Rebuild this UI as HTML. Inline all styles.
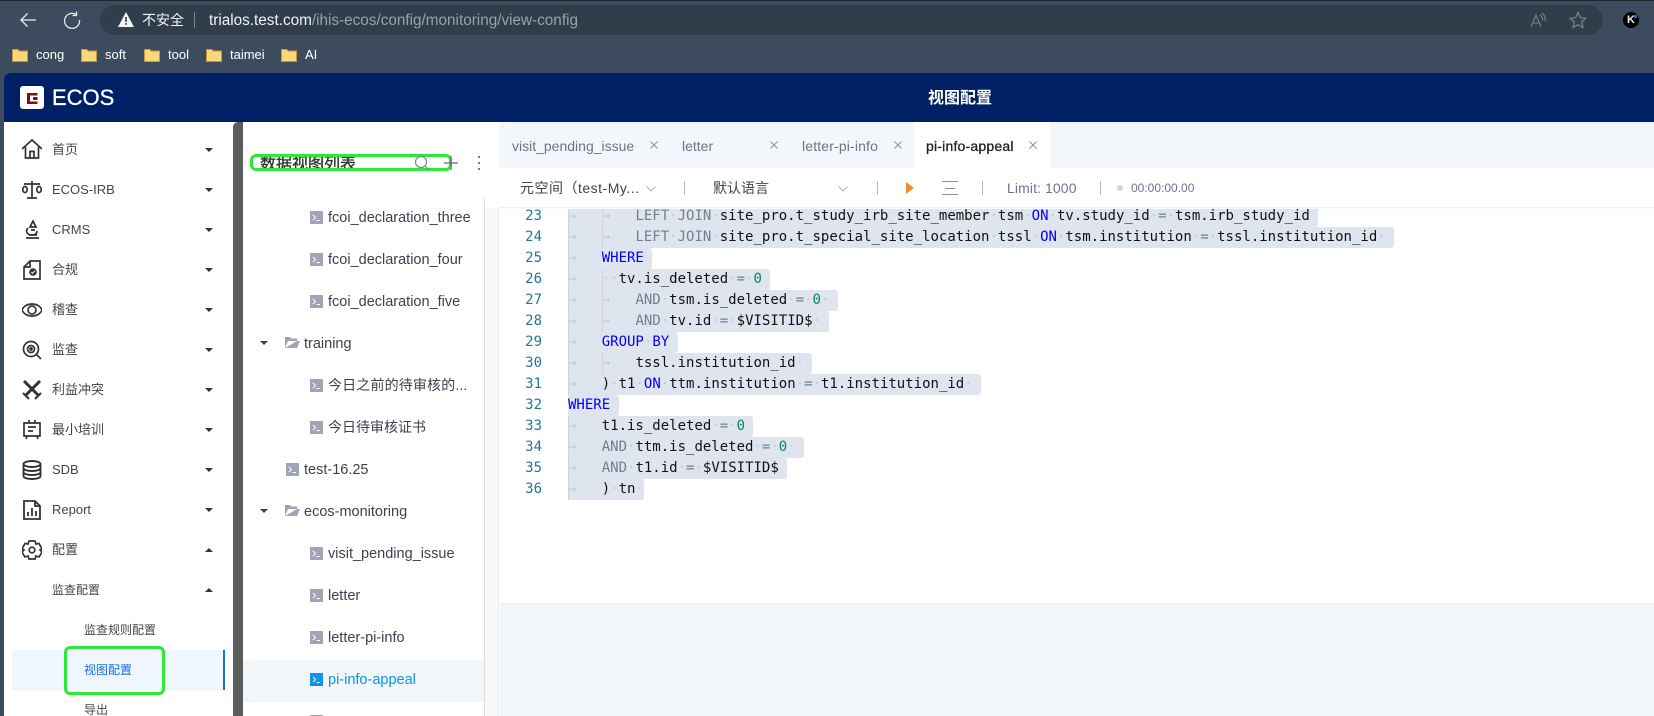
<!DOCTYPE html>
<html lang="zh"><head><meta charset="utf-8"><title>视图配置</title>
<style>
*{box-sizing:border-box}
html,body{margin:0;padding:0;width:1654px;height:716px;overflow:hidden}
body{position:relative;background:#3c4c5e;font-family:"Liberation Sans","Noto Sans CJK SC",sans-serif;color:#444}
.a{position:absolute}
.t{position:absolute;white-space:nowrap}
.bm{font-size:13px;color:#fff;top:48px;line-height:14px}
.nav{font-size:13px;color:#444;line-height:16px;left:52px}
.car{position:absolute;left:205px;width:0;height:0;border-left:4px solid transparent;border-right:4px solid transparent;border-top:4px solid #333}
.car.up{border-top:0;border-bottom:4px solid #333}
.ti{position:absolute;font-size:14.500px;color:#3d4150;line-height:20px;white-space:nowrap;margin-top:1px}
.ic{position:absolute;width:13px;height:13px}
.tab{position:absolute;top:137px;font-size:14px;line-height:18px;color:#6f7585;white-space:nowrap}
.x{position:absolute;top:141px;width:8px;height:8px}
.tb{position:absolute;font-size:14px;line-height:18px;top:179px;color:#444;white-space:nowrap}
.sep{position:absolute;top:181px;width:1px;height:14px;background:#b5b9c0}
.l{position:absolute;left:568px;height:21px;line-height:21px;white-space:pre;font-family:"DejaVu Sans Mono","Liberation Mono",monospace;font-size:14px;color:#111;background:#dfe5ee;border-radius:0 3px 3px 0}
.n{position:absolute;left:510px;width:32px;text-align:right;height:21px;line-height:21px;font-family:"DejaVu Sans Mono","Liberation Mono",monospace;font-size:14px;color:#237893}
.g{position:absolute;width:1px;background:#cfd3d8}
.l b{font-weight:normal;color:#0000ff}
.l i{font-style:normal;color:#708090}
.l u{text-decoration:none;color:#098658}
.l s{text-decoration:none;color:#c3cad3}
.ni{position:absolute;left:22px;width:20px;height:20px;fill:none;stroke:#333;stroke-width:1.7}
</style></head><body>
<!-- browser chrome -->
<div class="a" style="left:0;top:0;width:1654px;height:1px;background:#20262e"></div>
<svg class="a" style="left:18px;top:10px" width="20" height="20" fill="none" stroke="#e8ebee" stroke-width="1.3"><path d="M3 10H18M9.500 3.500L3 10L9.500 16.500"/></svg>
<svg class="a" style="left:63px;top:11px" width="18" height="18" fill="none" stroke="#e8ebee" stroke-width="1.3"><path d="M13 3.500A7.500 7.500 0 1 0 16.500 9M13.500 .5V4.500H9.500"/></svg>
<div class="a" style="left:100px;top:5px;width:1503px;height:30px;border-radius:15px;background:#303d4a"></div>
<svg class="a" style="left:118px;top:12px" width="16" height="15"><path d="M8 0L16 15H0Z" fill="#f3f4f5"/><path d="M7.200 5h1.600v5H7.200zM7.200 11h1.600v1.800H7.200z" fill="#303d4a"/></svg>
<div class="t" style="left:142px;top:11px;font-size:14px;line-height:18px;color:#f2f3f5">不安全</div>
<div class="a" style="left:194px;top:12px;width:1px;height:16px;background:#78828d"></div>
<div class="t" style="left:209px;top:12px;font-size:15.300px;line-height:18px;color:#9aa2ab"><span style="color:#f2f3f5">trialos.test.com</span>/ihis-ecos/config/monitoring/view-config</div>
<svg class="a" style="left:1530px;top:12px" width="17" height="16" fill="none" stroke="#7b848d" stroke-width="1.100"><path d="M1 15L6 3L11 15M3 11H9M10 3Q13 5 12.500 9M12 1Q16 4 15 9"/></svg>
<svg class="a" style="left:1569px;top:11px" width="18" height="18" fill="none" stroke="#7b848d" stroke-width="1.200"><path d="M9 1.500L11.300 6.700L16.800 7.300L12.700 11L13.900 16.500L9 13.700L4.100 16.500L5.300 11L1.200 7.300L6.700 6.700Z"/></svg>
<div class="a" style="left:1623px;top:12px;width:16px;height:16px;border-radius:50%;background:#000"></div>
<div class="t" style="left:1627px;top:14px;font-size:11px;line-height:12px;font-weight:bold;color:#eee">K</div>
<div class="a" style="left:1634px;top:15px;width:3px;height:3px;background:#2a6ee0"></div>
<!-- bookmarks -->
<svg class="a" style="left:12px;top:48px" width="16" height="14"><path d="M.5 1.500H6L7 3H15.500V13.500H.5Z" fill="#fbd777" stroke="#c9973a"/></svg><div class="t bm" style="left:36px">cong</div>
<svg class="a" style="left:81px;top:48px" width="16" height="14"><path d="M.5 1.500H6L7 3H15.500V13.500H.5Z" fill="#fbd777" stroke="#c9973a"/></svg><div class="t bm" style="left:105px">soft</div>
<svg class="a" style="left:144px;top:48px" width="16" height="14"><path d="M.5 1.500H6L7 3H15.500V13.500H.5Z" fill="#fbd777" stroke="#c9973a"/></svg><div class="t bm" style="left:168px">tool</div>
<svg class="a" style="left:206px;top:48px" width="16" height="14"><path d="M.5 1.500H6L7 3H15.500V13.500H.5Z" fill="#fbd777" stroke="#c9973a"/></svg><div class="t bm" style="left:230px">taimei</div>
<svg class="a" style="left:281px;top:48px" width="16" height="14"><path d="M.5 1.500H6L7 3H15.500V13.500H.5Z" fill="#fbd777" stroke="#c9973a"/></svg><div class="t bm" style="left:305px">AI</div>
<!-- app -->
<div class="a" style="left:4px;top:73px;width:1650px;height:643px;background:#fff;border-radius:6px 0 0 0;overflow:hidden"></div>
<div class="a" style="left:4px;top:73px;width:1650px;height:49px;background:#002065;border-radius:6px 0 0 0"></div>
<div class="a" style="left:20px;top:86px;width:24px;height:23px;background:#fff;border-radius:3px"></div>
<svg class="a" style="left:27px;top:93px" width="11" height="11"><path d="M0 0H10.500V2.500H3V8.500H10.500V11H0Z" fill="#7f0f14"/><path d="M6 4H10.500V7H6Z" fill="#7f0f14"/></svg>
<div class="t" style="left:52px;top:85px;font-size:22px;line-height:26px;color:#fff;-webkit-text-stroke:.3px #fff">ECOS</div>
<div class="t" style="left:928px;top:89px;font-size:16px;line-height:20px;font-weight:bold;color:#fff">视图配置</div>
<!-- sidebar scrollbar -->
<div class="a" style="left:233px;top:122px;width:10px;height:594px;background:#5c5c5c;border-radius:5px 0 0 0"></div>
<!-- sidebar nav -->
<svg class="ni" style="top:139px" viewBox="0 0 20 20" width="20" height="20"><path d="M0 10L10 1L20 10M3.500 8V19H16.500V8M8 19V12.500H12V19"/></svg>
<div class="t nav" style="top:142px">首页</div><div class="car" style="top:148px"></div>
<svg class="ni" style="top:180px" viewBox="0 0 20 20" width="20" height="20"><path d="M10 1V18M5 18H15M2 4H18"/><ellipse cx="3" cy="9.500" rx="2.200" ry="3"/><ellipse cx="17" cy="9.500" rx="2.200" ry="3"/></svg>
<div class="t nav" style="top:182px">ECOS-IRB</div><div class="car" style="top:188px"></div>
<svg class="ni" style="top:220px" viewBox="0 0 20 20" width="20" height="20"><path d="M4 18H17M7 15H15M11 1L8 7H14ZM6 8C3 11 5 15 10 15C14 15 15 13 15 11M9 10H13"/></svg>
<div class="t nav" style="top:222px">CRMS</div><div class="car" style="top:228px"></div>
<svg class="ni" style="top:260px" viewBox="0 0 20 20" width="20" height="20"><path d="M8 1H18V19H2V7ZM8 1V7H2"/><circle cx="11" cy="12" r="3.800" fill="#333" stroke="none"/><path d="M9.300 12L10.600 13.300L12.800 10.800" style="stroke:#fff;stroke-width:1"/></svg>
<div class="t nav" style="top:262px">合规</div><div class="car" style="top:268px"></div>
<svg class="ni" style="top:300px" viewBox="0 0 20 20" width="20" height="20"><path d="M0 10C3 2 17 2 20 10C17 18 3 18 0 10Z"/><circle cx="10" cy="10" r="4"/></svg>
<div class="t nav" style="top:302px">稽查</div><div class="car" style="top:308px"></div>
<svg class="ni" style="top:340px" viewBox="0 0 20 20" width="20" height="20"><circle cx="9" cy="9" r="7.500"/><circle cx="9" cy="9" r="3.500"/><circle cx="9" cy="9" r="1" fill="#333"/><path d="M14.500 14.500L19 19"/></svg>
<div class="t nav" style="top:342px">监查</div><div class="car" style="top:348px"></div>
<svg class="ni" style="top:380px" viewBox="0 0 20 20" width="20" height="20"><path style="stroke-width:3" d="M2 1L17 16M18 1L3 16"/><path style="stroke-width:2" d="M1 13L7 19M13 19L19 13"/></svg>
<div class="t nav" style="top:382px">利益冲突</div><div class="car" style="top:388px"></div>
<svg class="ni" style="top:420px" viewBox="0 0 20 20" width="20" height="20"><path d="M2 3H18V16H2ZM6 7H14M6 11H11M7 0V3M13 0V3M5 16L4 19M15 16L16 19"/></svg>
<div class="t nav" style="top:422px">最小培训</div><div class="car" style="top:428px"></div>
<svg class="ni" style="top:460px;stroke-width:1.9" viewBox="0 0 20 20" width="20" height="20"><ellipse cx="10" cy="4" rx="8.500" ry="3"/><path d="M1.500 4V16C1.500 20 18.500 20 18.500 16V4M1.500 8C1.500 12 18.500 12 18.500 8M1.500 12C1.500 16 18.500 16 18.500 12"/></svg>
<div class="t nav" style="top:462px">SDB</div><div class="car" style="top:468px"></div>
<svg class="ni" style="top:500px;stroke-width:1.8" viewBox="0 0 20 20" width="20" height="20"><path d="M2 1H13L18 6V19H2ZM13 1V6H18M6 16V12M10 16V8M14 16V11"/></svg>
<div class="t nav" style="top:502px">Report</div><div class="car" style="top:508px"></div>
<svg class="ni" style="top:540px" viewBox="0 0 20 20" width="20" height="20"><path d="M7 1H13L14 4L17 3.500L20 9L18 10L20 12L17 17L14 16L13 19H7L6 16L3 17L0 12L2 10L0 9L3 3.500L6 4Z"/><circle cx="10" cy="10" r="2.800"/></svg>
<div class="t nav" style="top:542px">配置</div><div class="car up" style="top:548px"></div>
<div class="t nav" style="top:582px;font-size:12px">监查配置</div><div class="car up" style="top:588px"></div>
<div class="t nav" style="top:622px;left:84px;font-size:12px">监查规则配置</div>
<div class="a" style="left:12px;top:650px;width:213px;height:40px;background:#f0f6fd;border-right:2px solid #1a6fe0"></div>
<div class="t nav" style="top:662px;left:84px;font-size:12px;color:#1a6fe0">视图配置</div>
<div class="t nav" style="top:702px;left:84px;font-size:12px">导出</div>
<div class="a" style="left:64px;top:646px;width:101px;height:49px;border:3px solid #2ee838;border-radius:6px"></div>
<!-- tree -->
<div class="a" style="left:484px;top:198px;width:1px;height:518px;background:#dedfe2"></div>
<div class="a" style="left:485px;top:198px;width:14px;height:518px;background:#f9f9f9;border-right:1px solid #ececec"></div>
<div class="a" style="left:253px;top:150px;width:196px;height:24px;overflow:hidden"><div class="t" style="left:7px;top:5px;font-size:16px;line-height:20px;color:#333;-webkit-text-stroke:.35px #333">数据视图列表</div></div>
<div class="a" style="left:250px;top:154px;width:202px;height:17px;border:3px solid #2ee838;border-radius:6px"></div>
<div class="a" style="left:253px;top:171px;width:196px;height:4px;background:rgba(255,255,255,.7)"></div>
<svg class="a" style="left:414px;top:155px" width="16" height="16" fill="none" stroke="#80869a" stroke-width="1.200"><circle cx="7" cy="7" r="5.500"/><path d="M11 11L15 15"/></svg>
<svg class="a" style="left:444px;top:156px" width="14" height="14" fill="none" stroke="#666c7e" stroke-width="1.200"><path d="M0 7H14M7 0V14"/></svg>
<svg class="a" style="left:477px;top:156px" width="4" height="15" fill="#777"><rect x="1" y="0" width="2" height="2"/><rect x="1" y="6" width="2" height="2"/><rect x="1" y="12" width="2" height="2"/></svg>

<svg class="ic" style="left:310px;top:211px" viewBox="0 0 13 13"><rect width="13" height="13" fill="#a0a4b6"/><path d="M3 4L5.500 6.500L3 9M6.500 9.500H10" fill="none" stroke="#fff"/></svg><div class="ti" style="left:328px;top:207px">fcoi_declaration_three</div>
<svg class="ic" style="left:310px;top:253px" viewBox="0 0 13 13"><rect width="13" height="13" fill="#a0a4b6"/><path d="M3 4L5.500 6.500L3 9M6.500 9.500H10" fill="none" stroke="#fff"/></svg><div class="ti" style="left:328px;top:249px">fcoi_declaration_four</div>
<svg class="ic" style="left:310px;top:295px" viewBox="0 0 13 13"><rect width="13" height="13" fill="#a0a4b6"/><path d="M3 4L5.500 6.500L3 9M6.500 9.500H10" fill="none" stroke="#fff"/></svg><div class="ti" style="left:328px;top:291px">fcoi_declaration_five</div>
<div class="car" style="left:260px;top:341px;border-top-color:#444"></div>
<svg class="a" style="left:285px;top:336px" width="15" height="13"><path d="M0 12V1H5L6.500 2.500H12V5H3L0 12H12L15 5H12" fill="#a0a4b6"/></svg><div class="ti" style="left:304px;top:333px">training</div>
<svg class="ic" style="left:310px;top:379px" viewBox="0 0 13 13"><rect width="13" height="13" fill="#a0a4b6"/><path d="M3 4L5.500 6.500L3 9M6.500 9.500H10" fill="none" stroke="#fff"/></svg><div class="ti" style="left:328px;top:375px;font-size:14px;letter-spacing:.15px;margin-top:0">今日之前的待审核的...</div>
<svg class="ic" style="left:310px;top:421px" viewBox="0 0 13 13"><rect width="13" height="13" fill="#a0a4b6"/><path d="M3 4L5.500 6.500L3 9M6.500 9.500H10" fill="none" stroke="#fff"/></svg><div class="ti" style="left:328px;top:417px;font-size:14px;margin-top:0">今日待审核证书</div>
<svg class="ic" style="left:286px;top:463px" viewBox="0 0 13 13"><rect width="13" height="13" fill="#a0a4b6"/><path d="M3 4L5.500 6.500L3 9M6.500 9.500H10" fill="none" stroke="#fff"/></svg><div class="ti" style="left:304px;top:459px">test-16.25</div>
<div class="car" style="left:260px;top:509px;border-top-color:#444"></div>
<svg class="a" style="left:285px;top:504px" width="15" height="13"><path d="M0 12V1H5L6.500 2.500H12V5H3L0 12H12L15 5H12" fill="#a0a4b6"/></svg><div class="ti" style="left:304px;top:501px">ecos-monitoring</div>
<svg class="ic" style="left:310px;top:547px" viewBox="0 0 13 13"><rect width="13" height="13" fill="#a0a4b6"/><path d="M3 4L5.500 6.500L3 9M6.500 9.500H10" fill="none" stroke="#fff"/></svg><div class="ti" style="left:328px;top:543px">visit_pending_issue</div>
<svg class="ic" style="left:310px;top:589px" viewBox="0 0 13 13"><rect width="13" height="13" fill="#a0a4b6"/><path d="M3 4L5.500 6.500L3 9M6.500 9.500H10" fill="none" stroke="#fff"/></svg><div class="ti" style="left:328px;top:585px">letter</div>
<svg class="ic" style="left:310px;top:631px" viewBox="0 0 13 13"><rect width="13" height="13" fill="#a0a4b6"/><path d="M3 4L5.500 6.500L3 9M6.500 9.500H10" fill="none" stroke="#fff"/></svg><div class="ti" style="left:328px;top:627px">letter-pi-info</div>
<div class="a" style="left:243px;top:660px;width:241px;height:42px;background:#f2f6f9"></div>
<svg class="ic" style="left:310px;top:673px" viewBox="0 0 13 13"><rect width="13" height="13" fill="#0a96eb"/><path d="M3 4L5.500 6.500L3 9M6.500 9.500H10" fill="none" stroke="#fff"/></svg><div class="ti" style="left:328px;top:669px;color:#0a96eb">pi-info-appeal</div>
<svg class="a" style="left:310px;top:715px" width="13" height="1"><rect width="13" height="1" fill="#a0a4b6"/></svg>
<!-- editor -->
<div class="a" style="left:500px;top:603px;width:1154px;height:113px;background:#f2f6fa;border-top:1px solid #ecefef"></div>

<div class="n" style="top:206px">23</div>
<div class="n" style="top:227px">24</div>
<div class="n" style="top:248px">25</div>
<div class="n" style="top:269px">26</div>
<div class="n" style="top:290px">27</div>
<div class="n" style="top:311px">28</div>
<div class="n" style="top:332px">29</div>
<div class="n" style="top:353px">30</div>
<div class="n" style="top:374px">31</div>
<div class="n" style="top:395px">32</div>
<div class="n" style="top:416px">33</div>
<div class="n" style="top:437px">34</div>
<div class="n" style="top:458px">35</div>
<div class="n" style="top:479px">36</div>

<div class="l" style="top:206px;width:750px"><s>→   →   </s><i>LEFT</i><s>·</s><i>JOIN</i><s>·</s>site_pro.t_study_irb_site_member<s>·</s>tsm<s>·</s><b>ON</b><s>·</s>tv.study_id<s>·</s><i>=</i><s>·</s>tsm.irb_study_id</div>
<div class="l" style="top:227px;width:826px"><s>→   →   </s><i>LEFT</i><s>·</s><i>JOIN</i><s>·</s>site_pro.t_special_site_location<s>·</s>tssl<s>·</s><b>ON</b><s>·</s>tsm.institution<s>·</s><i>=</i><s>·</s>tssl.institution_id<s>·</s></div>
<div class="l" style="top:248px;width:84px"><s>→   </s><b>WHERE</b></div>
<div class="l" style="top:269px;width:202px"><s>→   ··</s>tv.is_deleted<s>·</s><i>=</i><s>·</s><u>0</u></div>
<div class="l" style="top:290px;width:270px"><s>→   →   </s><i>AND</i><s>·</s>tsm.is_deleted<s>·</s><i>=</i><s>·</s><u>0</u><s>·</s></div>
<div class="l" style="top:311px;width:261px"><s>→   →   </s><i>AND</i><s>·</s>tv.id<s>·</s><i>=</i><s>·</s>$VISITID$<s>·</s></div>
<div class="l" style="top:332px;width:110px"><s>→   </s><b>GROUP</b><s>·</s><b>BY</b></div>
<div class="l" style="top:353px;width:244px"><s>→   →   </s>tssl.institution_id<s>·</s></div>
<div class="l" style="top:374px;width:413px"><s>→   </s>)<s>·</s>t1<s>·</s><b>ON</b><s>·</s>ttm.institution<s>·</s><i>=</i><s>·</s>t1.institution_id<s>·</s></div>
<div class="l" style="top:395px;width:51px"><b>WHERE</b></div>
<div class="l" style="top:416px;width:185px"><s>→   </s>t1.is_deleted<s>·</s><i>=</i><s>·</s><u>0</u></div>
<div class="l" style="top:437px;width:236px"><s>→   </s><i>AND</i><s>·</s>ttm.is_deleted<s>·</s><i>=</i><s>·</s><u>0</u><s>·</s></div>
<div class="l" style="top:458px;width:219px"><s>→   </s><i>AND</i><s>·</s>t1.id<s>·</s><i>=</i><s>·</s>$VISITID$</div>
<div class="l" style="top:479px;width:76px"><s>→   </s>)<s>·</s>tn<s>·</s></div>
<div class="g" style="left:568px;top:206px;height:189px"></div>
<div class="g" style="left:568px;top:416px;height:84px"></div>
<div class="g" style="left:602px;top:206px;height:42px"></div>
<div class="g" style="left:602px;top:269px;height:63px"></div>
<div class="g" style="left:602px;top:353px;height:21px"></div>
<!-- tabs and toolbar -->
<div class="a" style="left:485px;top:122px;width:1169px;height:86px;background:#fff"></div>
<div class="a" style="left:499px;top:122px;width:1155px;height:46px;background:#f3f6fa"></div>
<div class="a" style="left:914px;top:122px;width:136px;height:46px;background:#fff"></div>
<div class="tab" style="left:512px">visit_pending_issue</div>
<svg class="x" style="left:650px" fill="none" stroke="#8a8f9c"><path d="M.5 .5L7.500 7.500M7.500 .5L.5 7.500"/></svg>
<div class="tab" style="left:682px">letter</div>
<svg class="x" style="left:770px" fill="none" stroke="#8a8f9c"><path d="M.5 .5L7.500 7.500M7.500 .5L.5 7.500"/></svg>
<div class="tab" style="left:802px;letter-spacing:.15px">letter-pi-info</div>
<svg class="x" style="left:894px" fill="none" stroke="#8a8f9c"><path d="M.5 .5L7.500 7.500M7.500 .5L.5 7.500"/></svg>
<div class="tab" style="left:926px;color:#222;-webkit-text-stroke:.3px #222;letter-spacing:.2px">pi-info-appeal</div>
<svg class="x" style="left:1029px" fill="none" stroke="#8a8f9c"><path d="M.5 .5L7.500 7.500M7.500 .5L.5 7.500"/></svg>
<div class="a" style="left:499px;top:207px;width:1155px;height:2px;background:linear-gradient(#e9ecf0,#fff)"></div>
<div class="tb" style="left:520px;letter-spacing:.5px">元空间（test-My...</div>
<svg class="a" style="left:646px;top:186px" width="10" height="6" fill="none" stroke="#b0b4bc"><path d="M.5 .5L5 5L9.500 .5"/></svg>
<div class="sep" style="left:684px"></div>
<div class="tb" style="left:713px">默认语言</div>
<svg class="a" style="left:838px;top:186px" width="10" height="6" fill="none" stroke="#b0b4bc"><path d="M.5 .5L5 5L9.500 .5"/></svg>
<div class="sep" style="left:877px"></div>
<svg class="a" style="left:906px;top:182px" width="8" height="12"><path d="M0 0L8 6L0 12Z" fill="#f58a2e"/></svg>
<svg class="a" style="left:942px;top:181px" width="16" height="14" stroke="#8a8f9c"><path d="M0 .5H16M3 7.500H13M0 13.500H16"/></svg>
<div class="sep" style="left:982px"></div>
<div class="tb" style="left:1007px;color:#6e7490;letter-spacing:.1px">Limit: 1000</div>
<div class="sep" style="left:1100px"></div>
<div class="a" style="left:1117px;top:185px;width:6px;height:6px;border-radius:50%;background:#d0d3da"></div>
<div class="tb" style="left:1131px;font-size:12px;color:#6e7490">00:00:00.00</div>
</body></html>
